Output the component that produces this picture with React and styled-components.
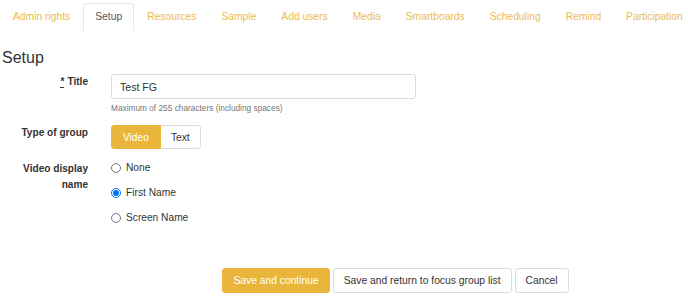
import React, { useState } from 'react';
import styled, { createGlobalStyle } from 'styled-components';

const GlobalStyle = createGlobalStyle`
    body {
        margin: 0;
        background: #fff;
        font-family: "Liberation Sans", Arial, sans-serif;
        color: #333;
    }
`;

const gold = '#e9b63b';

const Page = styled.div`
    width: 688px;
    height: 299px;
    overflow: hidden;
    padding-right: 8px;
    box-sizing: border-box;
`;

const TabBar = styled.ul`
    display: flex;
    list-style: none;
    margin: 3px -8px 0 1px;
    padding: 0;
    border-bottom: 1px solid #e6e6e6;
`;

const Tab = styled.li`
    font-size: 10.3px;
    line-height: 26px;
    padding: 0 11px;
    margin-right: 1px;
    margin-bottom: -1px;
    border: 1px solid ${props => (props.$active ? '#e6e6e6' : 'transparent')};
    border-bottom-color: ${props => (props.$active ? '#fff' : 'transparent')};
    border-radius: 3px 3px 0 0;
    background: #fff;
    color: ${props => (props.$active ? '#555' : '#edbb4c')};
    white-space: nowrap;
    cursor: pointer;
`;

const Heading = styled.h2`
    font-size: 16px;
    font-weight: normal;
    line-height: 18px;
    margin: 18px 0 7px 2px;
    color: #333;
`;

const Form = styled.div`
    display: grid;
    grid-template-columns: 88px 1fr;
    column-gap: 23px;
    row-gap: 12px;
`;

const Label = styled.div`
    text-align: right;
    font-weight: bold;
    font-size: 10.1px;
    line-height: 15.5px;
    color: #333;
`;

const Req = styled.abbr`
    text-decoration: none;
    border-bottom: 1px solid #333;
    margin-right: 3px;
`;

const Field = styled.div`
    display: flex;
    flex-direction: column;
    align-items: flex-start;
`;

const Input = styled.input`
    width: 305px;
    height: 25px;
    box-sizing: border-box;
    border: 1px solid #dcdcdc;
    border-radius: 3px;
    padding: 0 8px;
    font-family: inherit;
    font-size: 10.6px;
    color: #333;
    outline: none;
`;

const Help = styled.div`
    font-size: 8.3px;
    color: #777;
    margin-top: 4px;
`;

const Toggle = styled.div`
    display: flex;
`;

const ToggleButton = styled.button`
    height: 24px;
    padding: 0 ${props => (props.$first ? '11px' : '10px')};
    margin-left: ${props => (props.$first ? '0' : '-1px')};
    font-family: inherit;
    font-size: 10.2px;
    border: 1px solid ${props => (props.$on ? gold : '#dcdcdc')};
    background: ${props => (props.$on ? gold : '#fff')};
    color: ${props => (props.$on ? '#fff' : '#333')};
    border-radius: ${props => (props.$first ? '3px 0 0 3px' : '0 3px 3px 0')};
    position: relative;
    z-index: ${props => (props.$on ? 1 : 0)};
    cursor: pointer;
`;

const RadioList = styled.div`
    display: flex;
    flex-direction: column;
    margin-top: -6px;
`;

const RadioRow = styled.label`
    display: flex;
    align-items: center;
    gap: 5px;
    height: 25px;
    font-size: 10.2px;
    color: #333;
`;

const Radio = styled.input`
    width: 10px;
    height: 10px;
    margin: 0;
`;

const Footer = styled.div`
    grid-column: 2;
    display: flex;
    justify-content: center;
    gap: 3px;
    margin-top: 26px;
`;

const Button = styled.button`
    height: 25px;
    padding: 0 10px;
    font-family: inherit;
    font-size: 10.3px;
    border: 1px solid ${props => (props.$primary ? gold : '#dcdcdc')};
    background: ${props => (props.$primary ? gold : '#fff')};
    color: ${props => (props.$primary ? '#fff' : '#333')};
    border-radius: 3px;
    cursor: pointer;
`;

const tabs = ['Admin rights', 'Setup', 'Resources', 'Sample', 'Add users', 'Media', 'Smartboards', 'Scheduling', 'Remind', 'Participation'];

export default function App() {
    const [kind, setKind] = useState('video');
    const [display, setDisplay] = useState('first');

    return (
        <Page>
            <GlobalStyle />
            <TabBar>
                {tabs.map(t => (
                    <Tab key={t} $active={t === 'Setup'}>{t}</Tab>
                ))}
            </TabBar>
            <Heading>Setup</Heading>
            <Form>
                <Label><Req title="required">*</Req>Title</Label>
                <Field>
                    <Input defaultValue="Test FG" />
                    <Help>Maximum of 255 characters (including spaces)</Help>
                </Field>

                <Label>Type of group</Label>
                <Toggle>
                    <ToggleButton $first $on={kind === 'video'} onClick={() => setKind('video')}>Video</ToggleButton>
                    <ToggleButton $on={kind === 'text'} onClick={() => setKind('text')}>Text</ToggleButton>
                </Toggle>

                <Label>Video display<br />name</Label>
                <RadioList>
                    {[['none', 'None'], ['first', 'First Name'], ['screen', 'Screen Name']].map(([v, l]) => (
                        <RadioRow key={v}>
                            <Radio type="radio" name="display" checked={display === v} onChange={() => setDisplay(v)} />
                            {l}
                        </RadioRow>
                    ))}
                </RadioList>

                <Footer>
                    <Button $primary>Save and continue</Button>
                    <Button>Save and return to focus group list</Button>
                    <Button>Cancel</Button>
                </Footer>
            </Form>
        </Page>
    );
}
